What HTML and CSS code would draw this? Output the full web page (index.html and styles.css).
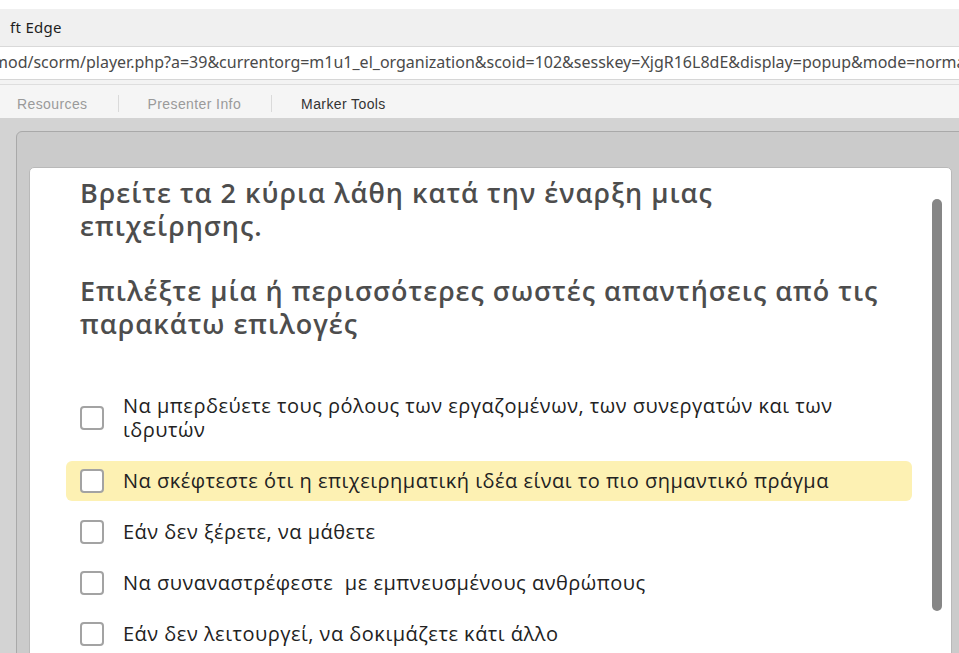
FILE: index.html
```html
<!DOCTYPE html>
<html lang="el">
<head>
<meta charset="utf-8">
<title>Quiz</title>
<link rel="stylesheet" href="styles.css">
</head>
<body>
  <div class="top-strip"></div>
  <div class="titlebar">ft Edge</div>
  <div class="urlbar"><span class="url">mod/scorm/player.php?a=39&amp;currentorg=m1u1_el_organization&amp;scoid=102&amp;sesskey=XjgR16L8dE&amp;display=popup&amp;mode=normal</span></div>
  <div class="urlbar-gap"></div>
  <nav class="tabs">
    <span class="tab">Resources</span>
    <span class="tab-sep"></span>
    <span class="tab">Presenter Info</span>
    <span class="tab-sep"></span>
    <span class="tab tab-active">Marker Tools</span>
  </nav>
  <main class="stage">
    <section class="panel">
      <div class="card">
        <h1 class="question">Βρείτε τα 2 κύρια λάθη κατά την έναρξη μιας επιχείρησης.</h1>
        <h2 class="instruction">Επιλέξτε μία ή περισσότερες σωστές απαντήσεις από τις παρακάτω επιλογές</h2>
        <ul class="options">
          <li class="option"><span class="box"></span><span class="label">Να μπερδεύετε τους ρόλους των εργαζομένων, των συνεργατών και των ιδρυτών</span></li>
          <li class="option option-hover"><span class="box"></span><span class="label">Να σκέφτεστε ότι η επιχειρηματική ιδέα είναι το πιο σημαντικό πράγμα</span></li>
          <li class="option"><span class="box"></span><span class="label">Εάν δεν ξέρετε, να μάθετε</span></li>
          <li class="option"><span class="box"></span><span class="label">Να συναναστρέφεστε &nbsp;με εμπνευσμένους ανθρώπους</span></li>
          <li class="option"><span class="box"></span><span class="label">Εάν δεν λειτουργεί, να δοκιμάζετε κάτι άλλο</span></li>
        </ul>
        <div class="scroll-thumb"></div>
      </div>
    </section>
  </main>
</body>
</html>
```

FILE: styles.css
```css
html, body {
  margin: 0;
  padding: 0;
  width: 959px;
  height: 653px;
  overflow: hidden;
  background: #d3d3d3;
}

.top-strip {
  height: 9px;
  background: #ffffff;
}

.titlebar {
  height: 38px;
  box-sizing: border-box;
  padding-left: 10px;
  line-height: 37px;
  background: #f0f0f0;
  border-bottom: 1px solid #d9d9d9;
  font-family: "Noto Sans", "Open Sans", sans-serif;
  font-size: 15px;
  letter-spacing: 0.3px;
  color: #1e1e1e;
}

.urlbar {
  height: 33px;
  box-sizing: border-box;
  background: #ffffff;
  border-bottom: 1px solid #d6d6d6;
  overflow: hidden;
  white-space: nowrap;
  line-height: 31px;
  font-family: "Noto Sans", "Open Sans", sans-serif;
  font-size: 16px;
  color: #4a4a4a;
}

.url {
  display: inline-block;
  margin-left: -7px;
}

.urlbar-gap {
  height: 5px;
  box-sizing: border-box;
  background: #f3f3f3;
  border-bottom: 1px solid #dedede;
}

.tabs {
  height: 33px;
  box-sizing: border-box;
  display: flex;
  align-items: center;
  padding: 4px 0 0 17px;
  background: #f5f5f5;
  font-family: "Liberation Sans", Arial, sans-serif;
  font-size: 14px;
  letter-spacing: 0.4px;
  color: #9a9a9a;
}

.tab-sep {
  width: 1px;
  height: 17px;
  margin: 0 29px 0 30px;
  background: #dadada;
}

.tab-active {
  color: #333333;
}

.stage {
  padding: 13px 0 0 16px;
  height: 534px;
  box-sizing: border-box;
}

.panel {
  width: 960px;
  height: 540px;
  box-sizing: border-box;
  padding: 35px 0 0 12px;
  background: #cbcbcb;
  border: 1px solid #a9a9a9;
  border-radius: 6px 6px 0 0;
}

.card {
  position: relative;
  width: 923px;
  height: 520px;
  box-sizing: border-box;
  padding: 8px 0 0 50px;
  background: #ffffff;
  border: 1px solid #b9b9b9;
  border-radius: 5px;
  overflow: hidden;
}

.question,
.instruction {
  margin: 0;
  width: 830px;
  font-family: "Open Sans", "Noto Sans", sans-serif;
  font-weight: 600;
  font-size: 27px;
  letter-spacing: 1px;
  line-height: 33px;
  color: #4d4d4d;
}

.question {
  width: 720px;
}

.instruction {
  margin-top: 32px;
}

.options {
  list-style: none;
  margin: 46px 0 0 -14px;
  padding: 0;
  width: 846px;
  display: flex;
  flex-direction: column;
  gap: 11px;
}

.option {
  display: flex;
  align-items: center;
  gap: 19px;
  padding: 8px 14px;
  border-radius: 6px;
  font-family: "Open Sans", "Noto Sans", sans-serif;
  font-size: 20px;
  letter-spacing: 0.5px;
  line-height: 24px;
  color: #222222;
}

.option-hover {
  background: #fdf1b3;
}

.box {
  flex: none;
  width: 24px;
  height: 24px;
  box-sizing: border-box;
  border: 2px solid #a3a3a3;
  border-radius: 4px;
  background: #ffffff;
}

.label {
  max-width: 740px;
}

/* custom scrollbar thumb drawn over the card's right edge */
.scroll-thumb {
  position: absolute;
  top: 31px;
  right: 9px;
  width: 10px;
  height: 412px;
  border-radius: 5px;
  background: #868686;
}
```
